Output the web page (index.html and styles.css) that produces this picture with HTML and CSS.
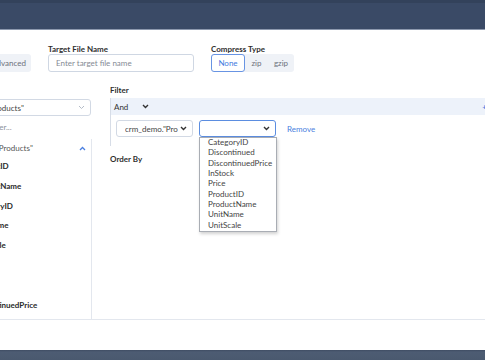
FILE: index.html
```html
<!DOCTYPE html>
<html>
<head>
<meta charset="utf-8">
<link rel="stylesheet" href="styles.css">
</head>
<body>
<header class="topbar"></header>
<main class="dialog">
  <div class="toolbar">
    <div class="field mode">
      <div class="label">Mode</div>
      <div class="seg">
        <span class="seg-btn">Basic</span>
        <span class="seg-btn adv">Advanced</span>
      </div>
    </div>
    <div class="field target">
      <div class="label">Target File Name</div>
      <input class="text-input" placeholder="Enter target file name">
    </div>
    <div class="field compress">
      <div class="label">Compress Type</div>
      <div class="seg comp">
        <span class="seg-btn active">None</span>
        <span class="seg-btn">zip</span>
        <span class="seg-btn">gzip</span>
      </div>
    </div>
  </div>
  <div class="content">
    <aside class="left">
      <div class="label">Table</div>
      <div class="select wide">
        <span class="sel-text">crm_demo."Products"</span>
        <svg class="chev light" width="7" height="5" viewBox="0 0 7 5"><polyline points="1,1 3.5,3.5 6,1" fill="none" stroke="#b4bcc8" stroke-width="1"/></svg>
      </div>
      <div class="search">Filter...</div>
      <div class="tree">
        <div class="tree-head">
          <span>crm_demo."Products"</span>
          <svg class="chev" width="7" height="5" viewBox="0 0 7 5"><polyline points="1,4 3.5,1.5 6,4" fill="none" stroke="#4a7fe0" stroke-width="1.3"/></svg>
        </div>
        <div class="tree-item">ProductID</div>
        <div class="tree-item">ProductName</div>
        <div class="tree-item">CategoryID</div>
        <div class="tree-item">UnitName</div>
        <div class="tree-item">UnitScale</div>
        <div class="tree-item">InStock</div>
        <div class="tree-item">Price</div>
        <div class="tree-item">DiscontinuedPrice</div>
      </div>
    </aside>
    <section class="right">
      <div class="label">Filter</div>
      <div class="filter-group">
        <div class="group-head">
          <span class="and">And</span>
          <svg class="chev dark" width="7" height="5" viewBox="0 0 7 5"><polyline points="1,1 3.5,3.5 6,1" fill="none" stroke="#333" stroke-width="1.4"/></svg>
          <span class="add">+</span>
        </div>
        <div class="cond">
          <div class="select">
            <span class="sel-text">crm_demo."Pro</span>
            <svg class="chev" width="7" height="5" viewBox="0 0 7 5"><polyline points="1,1 3.5,3.5 6,1" fill="none" stroke="#333" stroke-width="1.4"/></svg>
          </div>
          <div class="select focus">
            <span class="sel-text"></span>
            <svg class="chev" width="7" height="5" viewBox="0 0 7 5"><polyline points="1,1 3.5,3.5 6,1" fill="none" stroke="#333" stroke-width="1.4"/></svg>
            <ul class="dropdown">
              <li>CategoryID</li>
              <li>Discontinued</li>
              <li>DiscontinuedPrice</li>
              <li>InStock</li>
              <li>Price</li>
              <li>ProductID</li>
              <li>ProductName</li>
              <li>UnitName</li>
              <li>UnitScale</li>
            </ul>
          </div>
          <span class="remove">Remove</span>
        </div>
      </div>
      <div class="label order">Order By</div>
    </section>
  </div>
  <footer class="foot"></footer>
</main>
<div class="bottombar"></div>
</body>
</html>
```
FILE: styles.css
```css
* { box-sizing: border-box; }
html, body { margin: 0; padding: 0; }
body {
  width: 485px;
  height: 360px;
  overflow: hidden;
  background: #fff;
  font-family: Lato, "Open Sans", sans-serif;
  font-size: 8px;
  color: #333;
}
.topbar {
  height: 30px;
  background: linear-gradient(#33425b 0, #33425b 3px, #3a4a66 3px, #3a4a66 29px, #8d99ae 29px);
}
.dialog {
  height: 320px;
  display: flex;
  flex-direction: column;
  margin-left: -60px;
  width: 580px;
}
.label {
  font-weight: 700;
  line-height: 10px;
  height: 10px;
  color: #2f2f2f;
  white-space: nowrap;
}
.toolbar {
  display: flex;
  padding-top: 14px;
  height: 42px;
}
.field { display: flex; flex-direction: column; }
.mode { width: 91px; }
.target { margin-left: 17px; width: 146px; }
.compress { margin-left: 17px; }
.seg {
  display: flex;
  height: 18px;
  background: #eff2f7;
  border-radius: 3px;
}
.mode .seg { justify-content: flex-end; }
.seg-btn {
  display: flex;
  align-items: center;
  justify-content: center;
  color: #6c717b;
  height: 18px;
  white-space: nowrap;
}
.mode .seg-btn { padding: 0 6px; }
.seg-btn.adv { padding: 0 5px 0 6px; }
.comp { width: 83px; }
.comp .seg-btn { padding: 0 5px; }
.seg-btn.active {
  width: 34px;
  background: #fff;
  border: 1px solid #6894e3;
  border-radius: 3px;
  color: #3f7be0;
}
.comp .seg-btn:nth-child(2) { width: 23px; }
.comp .seg-btn:nth-child(3) { width: 26px; }
.text-input {
  height: 18px;
  width: 146px;
  border: 1px solid #cfd7e3;
  border-radius: 3px;
  padding: 0 0 0 7px;
  font: 8px Lato, sans-serif;
  color: #333;
  outline: none;
}
.text-input::placeholder { color: #858a94; }
.content {
  flex: 1;
  display: flex;
  padding-top: 13px;
  min-height: 0;
}
.left {
  width: 152px;
  display: flex;
  flex-direction: column;
  min-height: 0;
}
.left .label { padding-left: 2px; }
.select {
  position: relative;
  height: 17px;
  width: 77px;
  border: 1px solid #d2d9e4;
  border-radius: 3px;
  display: flex;
  align-items: center;
  justify-content: space-between;
  padding: 0 5px 0 8px;
  color: #444;
}
.select.wide {
  width: 151px;
  margin-top: 4px;
  padding-left: 8px;
  color: #444;
}
.sel-text { white-space: nowrap; overflow: hidden; }
.search {
  height: 23px;
  line-height: 23px;
  padding-left: 48px;
  color: #8b909a;
}
.tree {
  flex: 1;
  border-right: 1px solid #e3e7ee;
  width: 152px;
  overflow: hidden;
}
.tree-head {
  height: 18px;
  display: flex;
  align-items: center;
  justify-content: space-between;
  padding: 0 5px 0 18px;
  color: #555;
  white-space: nowrap;
}
.tree-item {
  height: 19.8px;
  line-height: 19.8px;
  padding-left: 32px;
  font-weight: 700;
  color: #2a2a2a;
  white-space: nowrap;
}
.right {
  flex: 1;
  padding-left: 18px;
}
.right .label { margin-bottom: 3px; }
.filter-group {
  border-left: 1px solid #d7dde7;
  margin-right: -20px;
  padding-bottom: 9px;
}
.group-head {
  height: 17px;
  background: #edf2fa;
  display: flex;
  align-items: center;
  padding-left: 3px;
}
.and { color: #333; }
.chev.dark { margin-left: 14px; }
.add {
  margin-left: auto;
  margin-right: 53px;
  color: #4a7fe0;
  font-weight: 700;
}
.cond {
  display: flex;
  align-items: center;
  padding: 5px 0 0 5px;
}
.select.focus {
  margin-left: 6px;
  border-color: #5b8de0;
}
.remove {
  margin-left: 11px;
  color: #4a7fe0;
}
.dropdown {
  position: absolute;
  top: 16px;
  left: -1px;
  width: 78px;
  height: 95px;
  margin: 0;
  padding: 0 0 0 8px;
  list-style: none;
  background: #fff;
  border: 1px solid #a9adb4;
  box-shadow: 1px 2px 3px rgba(0,0,0,0.18);
  z-index: 5;
}
.dropdown li {
  height: 10.35px;
  line-height: 9.5px;
  color: #444;
  white-space: nowrap;
}
.label.order { margin-top: 8px; }
.foot {
  height: 31px;
  border-top: 1px solid #e3e7ee;
}
.bottombar {
  height: 10px;
  background: linear-gradient(#3f4d63 0, #4d5c73 2px, #4a596f 10px);
}
```
